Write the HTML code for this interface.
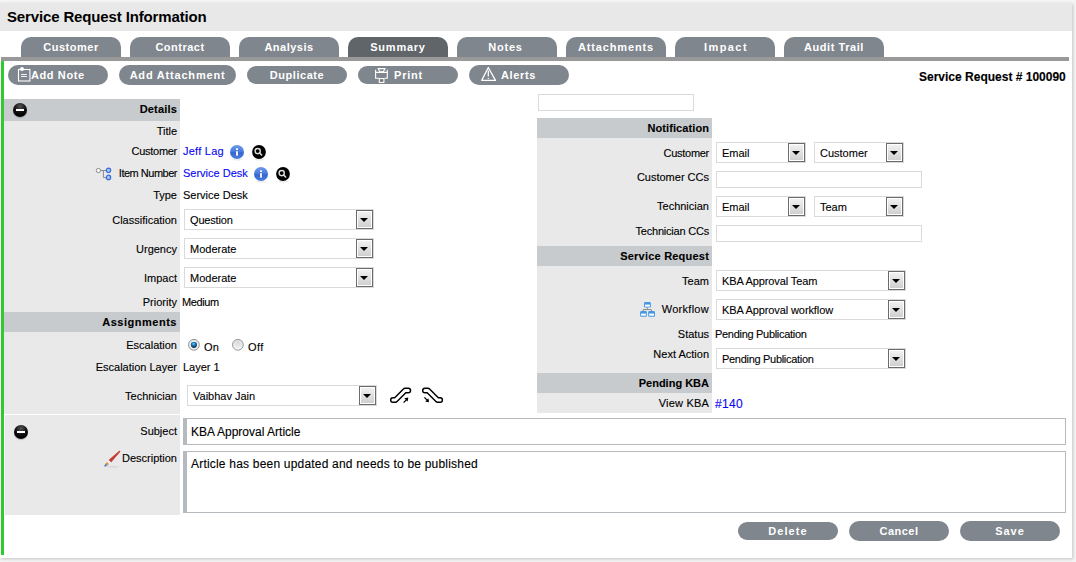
<!DOCTYPE html>
<html><head><meta charset="utf-8">
<style>
*{box-sizing:border-box;margin:0;padding:0}
html,body{width:1076px;height:562px;overflow:hidden;background:#f4f4f4;font-family:"Liberation Sans",sans-serif;color:#000}
.a{position:absolute}
#panel{position:absolute;left:0;top:3px;width:1072px;height:555px;background:#fff;box-shadow:1px 1px 3px rgba(0,0,0,0.2)}
#hdr{position:absolute;left:0;top:3px;width:1072px;height:28px;background:#e8e8e8}
#title{position:absolute;left:7px;top:8px;font-size:15px;font-weight:bold;line-height:17px;white-space:nowrap;letter-spacing:-0.14px}
.tab{position:absolute;top:37px;width:100px;height:20px;background:#7f868d;border-radius:10px 10px 0 0;color:#fff;font-size:11px;font-weight:bold;text-align:center;line-height:21px;white-space:nowrap}
.tab.on{background:#5f6569}
#bar{position:absolute;left:1px;top:57px;width:1068px;height:4px;background:#999}
#green{position:absolute;left:1px;top:61px;width:3px;height:494px;background:#30c930}
.btn{position:absolute;height:20px;top:65px;background:#7f868d;border-radius:10px;color:#fff;font-size:11px;font-weight:bold;line-height:20px;text-align:center;white-space:nowrap}
.btn.s{top:66px;height:18px;line-height:18px;border-radius:9px}
.sh{position:absolute;background:#c8cbce}
.lb{position:absolute;background:#e9e9e9}
.t{position:absolute;font-size:11px;line-height:13px;white-space:nowrap;-webkit-text-stroke:0.12px currentColor}
.r{text-align:right}
.b{font-weight:bold}
.lnk{color:#0808f4}
.sel{position:absolute;height:21px;border:1px solid #dadada;background:#fff;font-size:11px;line-height:13px;padding:4px 0 0 5px;white-space:nowrap;-webkit-text-stroke:0.1px #000}
.sel i{position:absolute;right:0;top:0;width:17px;height:19px;border:1px solid #6b6b6b;background:linear-gradient(#f3f3f3,#cdcdcd);box-shadow:inset 0 0 0 1px #fff}
.sel i:after{content:"";position:absolute;left:3px;top:7px;border-left:4px solid transparent;border-right:4px solid transparent;border-top:4px solid #000}
.inp{position:absolute;height:17px;border:1px solid #dadada;background:#fff}
.minus{position:absolute;width:14px;height:14px;border-radius:50%;background:radial-gradient(circle at 50% 25%,#555 0,#111 45%,#000 70%);box-shadow:0 1px 1px rgba(0,0,0,0.2)}
.minus:after{content:"";position:absolute;left:3px;top:6px;width:8px;height:2px;background:#fff}
.info{position:absolute;width:14px;height:14px;border-radius:50%;background:radial-gradient(circle at 50% 20%,#8db4f0 0,#4a7fd8 55%,#3a6cc8 100%);box-shadow:0 1px 1px rgba(0,0,0,0.2)}
.info:before{content:"";position:absolute;left:6px;top:3px;width:2px;height:2px;background:#fff}
.info:after{content:"";position:absolute;left:6px;top:6px;width:2px;height:5px;background:#fff}
.mag{position:absolute;width:14px;height:14px;border-radius:50%;background:#000;box-shadow:0 1px 1px rgba(0,0,0,0.2)}
.txtb{position:absolute;border:1px solid #b5babe;border-left:4px solid #b5babe;background:#fff}
</style></head><body>
<div id="panel"></div>
<div id="hdr"></div>
<div id="title">Service Request Information</div>

<div class="tab" style="left:21px;letter-spacing:0.51px">Customer</div>
<div class="tab" style="left:130px;letter-spacing:0.49px">Contract</div>
<div class="tab" style="left:239px;letter-spacing:0.5px">Analysis</div>
<div class="tab on" style="left:348px;letter-spacing:0.77px">Summary</div>
<div class="tab" style="left:457px;letter-spacing:0.75px;padding-right:3px">Notes</div>
<div class="tab" style="left:566px;letter-spacing:0.86px">Attachments</div>
<div class="tab" style="left:675px;letter-spacing:1.44px;padding-left:2px">Impact</div>
<div class="tab" style="left:784px;letter-spacing:0.55px">Audit Trail</div>
<div id="bar"></div>
<div id="green"></div>

<div class="btn" style="left:8px;width:100px;padding-left:23px;text-align:left;letter-spacing:0.6px">Add Note</div>
<svg class="a" style="left:14px;top:64px" width="20" height="22" viewBox="0 0 20 22"><rect x="4.5" y="5.5" width="11.4" height="11.5" fill="none" stroke="#fff" stroke-width="1.1"/><circle cx="8" cy="4.9" r="2" fill="#fff"/><path d="M7 10.5h5.9M7 12.5h5.9" stroke="#fff" stroke-width="0.9"/></svg>
<div class="btn" style="left:119px;width:117px;letter-spacing:0.8px">Add Attachment</div>
<div class="btn s" style="left:247px;width:100px;letter-spacing:0.56px">Duplicate</div>
<div class="btn s" style="left:358px;width:100px;padding-left:36px;text-align:left;letter-spacing:0.8px">Print</div>
<svg class="a" style="left:372px;top:65px" width="20" height="20" viewBox="0 0 20 20"><path d="M3.6 4.8V13.3H6.8M15.3 4.8V13.3H12.4M3.6 7.4H15.3" fill="none" stroke="#fff" stroke-width="1.1"/><path d="M6.2 3.6H13L11.4 6.8H7.8Z" fill="none" stroke="#fff" stroke-width="1.1"/><rect x="7.3" y="13.6" width="4.6" height="3.8" fill="#777" stroke="#fff" stroke-width="1.1"/></svg>
<div class="btn" style="left:469px;width:100px;padding-left:32px;text-align:left;letter-spacing:0.62px">Alerts</div>
<svg class="a" style="left:480px;top:66px" width="17" height="16" viewBox="0 0 17 16"><path d="M8.3 1.5L1.7 14.4H15.5Z" fill="none" stroke="#fff" stroke-width="1.25" stroke-linejoin="round"/><path d="M8.3 4.6V10.4M8.3 11.9V13.1" stroke="#fff" stroke-width="1.3"/></svg>
<div class="t b" style="left:919px;top:70px;font-size:12px;line-height:14px">Service Request # 100090</div>

<!-- ===== left details ===== -->
<div class="sh" style="left:4px;top:99px;width:176px;height:22px"></div>
<div class="minus" style="left:13px;top:103px"></div>
<div class="lb" style="left:4px;top:121px;width:176px;height:191px"></div>
<div class="sh" style="left:4px;top:312px;width:176px;height:20px"></div>
<div class="lb" style="left:4px;top:332px;width:176px;height:82px"></div>

<div class="t r b" style="left:0;width:177px;top:103px;letter-spacing:0.18px">Details</div>
<div class="t r" style="left:0;width:177px;top:125px">Title</div>
<div class="t r" style="left:0;width:177px;top:145px;letter-spacing:-0.28px">Customer</div>
<svg class="a" style="left:95px;top:167px" width="17" height="14" viewBox="0 0 17 14"><path d="M5.5 3.5h8M8.4 3.5v7h5" fill="none" stroke="#8a8a8a" stroke-width="1"/><circle cx="3.4" cy="3.5" r="2.1" fill="#fff" stroke="#888" stroke-width="1"/><circle cx="13.5" cy="3.3" r="2.2" fill="#a8c4f4" stroke="#3b6fd8" stroke-width="1.2"/><circle cx="13.5" cy="10.4" r="2.2" fill="#a8c4f4" stroke="#3b6fd8" stroke-width="1.2"/></svg>
<div class="t r" style="left:0;width:177px;top:167px;letter-spacing:-0.49px">Item Number</div>
<div class="t r" style="left:0;width:177px;top:189px">Type</div>
<div class="t r" style="left:0;width:177px;top:214px">Classification</div>
<div class="t r" style="left:0;width:177px;top:243px">Urgency</div>
<div class="t r" style="left:0;width:177px;top:272px">Impact</div>
<div class="t r" style="left:0;width:177px;top:296px">Priority</div>
<div class="t r b" style="left:0;width:177px;top:316px;letter-spacing:0.52px">Assignments</div>
<div class="t r" style="left:0;width:177px;top:339px">Escalation</div>
<div class="t r" style="left:0;width:177px;top:361px">Escalation Layer</div>
<div class="t r" style="left:0;width:177px;top:390px">Technician</div>

<div class="t lnk" style="left:183px;top:145px;letter-spacing:0.24px">Jeff Lag</div>
<svg class="a" style="left:230px;top:145px" width="15" height="16" viewBox="0 0 15 16"><defs><linearGradient id="ig230" x1="0" y1="0" x2="0" y2="1"><stop offset="0" stop-color="#6f98ea"/><stop offset="0.45" stop-color="#4a7de0"/><stop offset="0.55" stop-color="#3566d2"/><stop offset="1" stop-color="#4a7ee2"/></linearGradient></defs><ellipse cx="7.5" cy="14.6" rx="5" ry="1" fill="rgba(0,0,0,0.08)"/><circle cx="7" cy="7" r="7" fill="url(#ig230)"/><rect x="6" y="3.3" width="2" height="1.7" fill="#fff"/><rect x="6" y="6.2" width="2" height="4.5" fill="#f4f0e0"/></svg>
<svg class="a" style="left:252px;top:145px" width="15" height="16" viewBox="0 0 15 16"><ellipse cx="7.5" cy="14.6" rx="5" ry="1" fill="rgba(0,0,0,0.08)"/><circle cx="7" cy="7" r="6.9" fill="#000"/><circle cx="5.7" cy="6.1" r="2.6" fill="none" stroke="#ddd" stroke-width="1.4"/><path d="M7.6 8L9.6 10" stroke="#ddd" stroke-width="1.6" stroke-linecap="round"/></svg>
<div class="t lnk" style="left:183px;top:167px">Service Desk</div>
<svg class="a" style="left:254px;top:167px" width="15" height="16" viewBox="0 0 15 16"><defs><linearGradient id="ig254" x1="0" y1="0" x2="0" y2="1"><stop offset="0" stop-color="#6f98ea"/><stop offset="0.45" stop-color="#4a7de0"/><stop offset="0.55" stop-color="#3566d2"/><stop offset="1" stop-color="#4a7ee2"/></linearGradient></defs><ellipse cx="7.5" cy="14.6" rx="5" ry="1" fill="rgba(0,0,0,0.08)"/><circle cx="7" cy="7" r="7" fill="url(#ig254)"/><rect x="6" y="3.3" width="2" height="1.7" fill="#fff"/><rect x="6" y="6.2" width="2" height="4.5" fill="#f4f0e0"/></svg>
<svg class="a" style="left:276px;top:167px" width="15" height="16" viewBox="0 0 15 16"><ellipse cx="7.5" cy="14.6" rx="5" ry="1" fill="rgba(0,0,0,0.08)"/><circle cx="7" cy="7" r="6.9" fill="#000"/><circle cx="5.7" cy="6.1" r="2.6" fill="none" stroke="#ddd" stroke-width="1.4"/><path d="M7.6 8L9.6 10" stroke="#ddd" stroke-width="1.6" stroke-linecap="round"/></svg>
<div class="t" style="left:183px;top:189px">Service Desk</div>
<div class="sel" style="left:184px;top:209px;width:190px;letter-spacing:-0.18px">Question<i></i></div>
<div class="sel" style="left:184px;top:238px;width:190px">Moderate<i></i></div>
<div class="sel" style="left:184px;top:267px;width:190px">Moderate<i></i></div>
<div class="t" style="left:182px;top:296px;letter-spacing:-0.38px">Medium</div>

<svg class="a" style="left:187px;top:338px" width="14" height="14" viewBox="0 0 14 14"><defs><radialGradient id="rb" cx="0.45" cy="0.35" r="0.6"><stop offset="0" stop-color="#6fd4ff"/><stop offset="0.45" stop-color="#1f7ab8"/><stop offset="1" stop-color="#0d2c4a"/></radialGradient><linearGradient id="rg" x1="0" y1="0" x2="0" y2="1"><stop offset="0" stop-color="#cfd2d6"/><stop offset="1" stop-color="#f6f6f6"/></linearGradient></defs><circle cx="6.9" cy="6.8" r="5.4" fill="#fff" stroke="#8f9090" stroke-width="1"/><circle cx="6.9" cy="6.8" r="4.3" fill="none" stroke="#c8c8c8" stroke-width="0.6"/><circle cx="6.9" cy="6.8" r="3.1" fill="url(#rb)"/></svg>
<svg class="a" style="left:231px;top:338px" width="14" height="14" viewBox="0 0 14 14"><circle cx="6.9" cy="6.8" r="5.4" fill="url(#rg)" stroke="#999a9a" stroke-width="1"/><circle cx="6.9" cy="6.8" r="4" fill="none" stroke="#fff" stroke-width="0.6" opacity="0.6"/></svg>
<div class="t" style="left:204px;top:341px;letter-spacing:0.2px">On</div>
<div class="t" style="left:248px;top:341px;letter-spacing:0.4px">Off</div>
<div class="t" style="left:183px;top:361px">Layer 1</div>
<div class="sel" style="left:187px;top:385px;width:190px">Vaibhav Jain<i></i></div>
<svg class="a" style="left:389px;top:386px" width="24" height="18" viewBox="0 0 24 18"><path d="M3.9 14H6.5L16 4.5H19.3" fill="none" stroke="#000" stroke-width="5.9" stroke-linecap="round" stroke-linejoin="round"/><path d="M3.9 14H6.5L16 4.5H19.3" fill="none" stroke="#fff" stroke-width="3.0" stroke-linecap="round" stroke-linejoin="round"/><path d="M14.6 16.6L18.2 13" stroke="#000" stroke-width="1.2"/><path d="M19.3 11.6L15.3 12.3L18.6 15.6Z" fill="#000"/></svg>
<svg class="a" style="left:420px;top:386px" width="24" height="18" viewBox="0 0 24 18"><path d="M4.9 4.5H8L17.5 14H20.2" fill="none" stroke="#000" stroke-width="5.9" stroke-linecap="round" stroke-linejoin="round"/><path d="M4.9 4.5H8L17.5 14H20.2" fill="none" stroke="#fff" stroke-width="3.0" stroke-linecap="round" stroke-linejoin="round"/><path d="M4.4 11.4L8 15" stroke="#000" stroke-width="1.2"/><path d="M9 16.2L8.4 12.2L5.2 15.6Z" fill="#000"/></svg>


<!-- ===== bottom subject/description ===== -->
<div class="lb" style="left:5px;top:415px;width:175px;height:100px"></div>
<div class="minus" style="left:14px;top:425px"></div>
<div class="t r" style="left:0;width:177px;top:425px">Subject</div>
<svg class="a" style="left:102px;top:449px" width="20" height="20" viewBox="0 0 20 20"><ellipse cx="11" cy="17.8" rx="6" ry="1" fill="rgba(0,0,0,0.06)"/><path d="M9.02 13.41L6.62 11.01L17.32 1.77Q18.3 1.3 18.3 2.77Z" fill="#c83a34"/><path d="M7.11 15.03L4.99 12.91L6.76 11.15L8.88 13.27Z" fill="#f2f2f2"/><path d="M5.26 16.73L3.28 14.75L5.06 12.98L7.04 14.96Z" fill="#d19a45"/><path d="M2.78 17.78L2.22 17.22L3.35 14.82L5.19 16.66Z" fill="#4477dd"/></svg>
<div class="t r" style="left:0;width:177px;top:452px">Description</div>
<div class="txtb" style="left:183px;top:418px;width:883px;height:27px"></div>
<div class="t" style="left:191px;top:425px;font-size:12px;line-height:14px">KBA Approval Article</div>
<div class="txtb" style="left:183px;top:451px;width:883px;height:62px"></div>
<div class="t" style="left:191px;top:457px;font-size:12px;line-height:14px;letter-spacing:0.2px">Article has been updated and needs to be published</div>

<div class="btn s" style="left:738px;top:522px;width:100px;letter-spacing:1.08px">Delete</div>
<div class="btn" style="left:849px;top:521px;width:100px;letter-spacing:0.5px">Cancel</div>
<div class="btn" style="left:960px;top:521px;width:100px;letter-spacing:0.93px">Save</div>

<!-- ===== right column ===== -->
<div class="inp" style="left:538px;top:94px;width:156px;height:17px"></div>
<div class="sh" style="left:537px;top:118px;width:175px;height:20px"></div>
<div class="lb" style="left:537px;top:138px;width:175px;height:108px"></div>
<div class="sh" style="left:537px;top:246px;width:175px;height:20px"></div>
<div class="lb" style="left:537px;top:266px;width:175px;height:107px"></div>
<div class="sh" style="left:537px;top:373px;width:175px;height:20px"></div>
<div class="lb" style="left:537px;top:393px;width:175px;height:20px"></div>

<div class="t r b" style="left:537px;width:172px;top:122px;letter-spacing:0.09px">Notification</div>
<div class="t r" style="left:537px;width:172px;top:147px;letter-spacing:-0.28px">Customer</div>
<div class="t r" style="left:537px;width:172px;top:171px">Customer CCs</div>
<div class="t r" style="left:537px;width:172px;top:200px">Technician</div>
<div class="t r" style="left:537px;width:172px;top:225px;letter-spacing:-0.21px">Technician CCs</div>
<div class="t r b" style="left:537px;width:172px;top:250px;letter-spacing:0.21px">Service Request</div>
<div class="t r" style="left:537px;width:172px;top:275px">Team</div>
<svg class="a" style="left:638px;top:300px" width="19" height="19" viewBox="0 0 19 19"><path d="M9.3 7.6V9.6M5.2 11V9.6H13.4V11" fill="none" stroke="#8a8a8a" stroke-width="1"/><rect x="6" y="2.1" width="6.9" height="5.5" rx="1.3" fill="#4597e4"/><rect x="7" y="4.6" width="4.9" height="2" fill="#fff"/><rect x="2.1" y="11.1" width="6.7" height="5.7" rx="1.3" fill="#4597e4"/><rect x="3.1" y="13.6" width="4.7" height="2.1" fill="#fff"/><rect x="10.2" y="11.1" width="6.8" height="5.7" rx="1.3" fill="#4597e4"/><rect x="11.2" y="13.6" width="4.8" height="2.1" fill="#fff"/></svg>
<div class="t r" style="left:537px;width:172px;top:303px;letter-spacing:0.28px">Workflow</div>
<div class="t r" style="left:537px;width:172px;top:328px">Status</div>
<div class="t r" style="left:537px;width:172px;top:348px">Next Action</div>
<div class="t r b" style="left:537px;width:172px;top:377px">Pending KBA</div>
<div class="t r" style="left:537px;width:172px;top:397px;letter-spacing:0.2px">View KBA</div>

<div class="sel" style="left:716px;top:142px;width:90px">Email<i></i></div>
<div class="sel" style="left:814px;top:142px;width:90px">Customer<i></i></div>
<div class="inp" style="left:716px;top:171px;width:206px"></div>
<div class="sel" style="left:716px;top:196px;width:90px">Email<i></i></div>
<div class="sel" style="left:814px;top:196px;width:90px">Team<i></i></div>
<div class="inp" style="left:716px;top:225px;width:206px"></div>
<div class="sel" style="left:716px;top:270px;width:190px;letter-spacing:-0.1px">KBA Approval Team<i></i></div>
<div class="sel" style="left:716px;top:299px;width:190px;letter-spacing:-0.1px">KBA Approval workflow<i></i></div>
<div class="t" style="left:715px;top:328px;letter-spacing:-0.3px">Pending Publication</div>
<div class="sel" style="left:716px;top:348px;width:190px;letter-spacing:-0.3px">Pending Publication<i></i></div>
<div class="t lnk" style="left:715px;top:397px;font-size:12px;line-height:14px;letter-spacing:0.3px">#140</div>

</body></html>
